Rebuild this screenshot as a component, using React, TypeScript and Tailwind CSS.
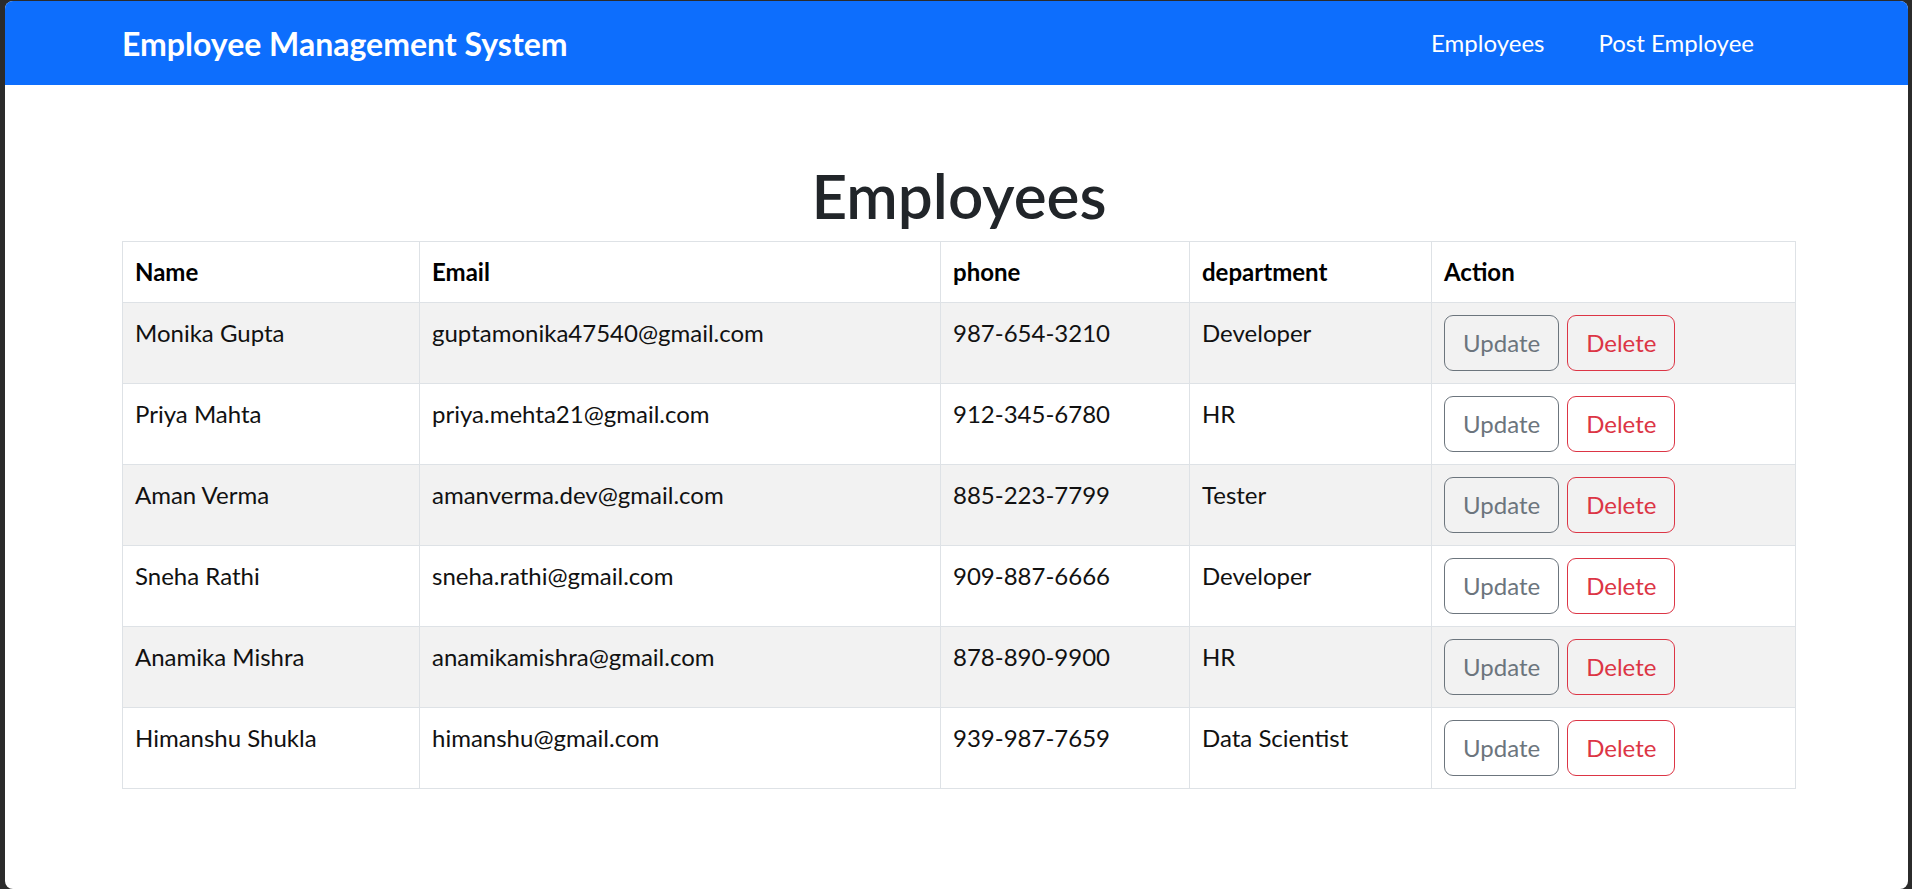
import React from 'react';

type Employee = {
    name: string;
    email: string;
    phone: string;
    department: string;
};

// dados da tabela
const employees: Employee[] = [
    { name: 'Monika Gupta', email: 'guptamonika47540@gmail.com', phone: '987-654-3210', department: 'Developer' },
    { name: 'Priya Mahta', email: 'priya.mehta21@gmail.com', phone: '912-345-6780', department: 'HR' },
    { name: 'Aman Verma', email: 'amanverma.dev@gmail.com', phone: '885-223-7799', department: 'Tester' },
    { name: 'Sneha Rathi', email: 'sneha.rathi@gmail.com', phone: '909-887-6666', department: 'Developer' },
    { name: 'Anamika Mishra', email: 'anamikamishra@gmail.com', phone: '878-890-9900', department: 'HR' },
    { name: 'Himanshu Shukla', email: 'himanshu@gmail.com', phone: '939-987-7659', department: 'Data Scientist' },
];

const Navbar = () => (
    <nav className="bg-[#0d6efd] h-[84px] flex items-center pl-[117px] pr-[154px]">
        <div className="flex-1 text-[32px] font-bold text-white leading-[45px]">Employee Management System</div>
        <div className="flex items-center gap-[54px] text-[24px] text-white leading-[36px]">
            <a href="#">Employees</a>
            <a href="#">Post Employee</a>
        </div>
    </nav>
);

const EmployeeTable = () => (
    <table className="w-full border-collapse text-[24px] leading-[36px] text-[#111]">
        <colgroup>
            <col className="w-[297px]" />
            <col className="w-[521px]" />
            <col className="w-[249px]" />
            <col className="w-[242px]" />
            <col />
        </colgroup>
        <thead>
            <tr className="bg-white">
                <th className="border border-[#dee2e6] px-3 py-3 text-left font-bold text-black">Name</th>
                <th className="border border-[#dee2e6] px-3 py-3 text-left font-bold text-black">Email</th>
                <th className="border border-[#dee2e6] px-3 py-3 text-left font-bold text-black">phone</th>
                <th className="border border-[#dee2e6] px-3 py-3 text-left font-bold text-black">department</th>
                <th className="border border-[#dee2e6] px-3 py-3 text-left font-bold text-black">Action</th>
            </tr>
        </thead>
        <tbody>
            {employees.map((emp, i) => (
                <tr key={emp.email} className={i % 2 === 0 ? 'bg-[#f2f2f2]' : 'bg-white'}>
                    <td className="border border-[#dee2e6] px-3 py-3 align-top">{emp.name}</td>
                    <td className="border border-[#dee2e6] px-3 py-3 align-top">{emp.email}</td>
                    <td className="border border-[#dee2e6] px-3 py-3 align-top">{emp.phone}</td>
                    <td className="border border-[#dee2e6] px-3 py-3 align-top">{emp.department}</td>
                    <td className="border border-[#dee2e6] px-3 py-3 align-top">
                        <div className="flex gap-2">
                            <button className="border border-[#6c757d] text-[#6c757d] rounded-[9px] px-[18px] py-[9px] leading-[36px]">
                                Update
                            </button>
                            <button className="border border-[#dc3545] text-[#dc3545] rounded-[9px] px-[18px] py-[9px] leading-[36px]">
                                Delete
                            </button>
                        </div>
                    </td>
                </tr>
            ))}
        </tbody>
    </table>
);

const App: React.FC = () => {
    return (
        <div className="h-[889px] bg-[#2b2b2b] pl-[5px] pr-[4px] pt-[1px] overflow-hidden" style={{ fontFamily: 'Lato, "Noto Sans", sans-serif' }}>
            <div className="h-full bg-white rounded-[8px] overflow-hidden">
                <Navbar />
                <div className="pl-[117px] w-[1791px]">
                    <h1 className="mt-[74px] mb-[10px] text-center text-[62px] leading-[72px] font-semibold text-[#212529]">Employees</h1>
                    <EmployeeTable />
                </div>
            </div>
        </div>
    );
};

export default App;
